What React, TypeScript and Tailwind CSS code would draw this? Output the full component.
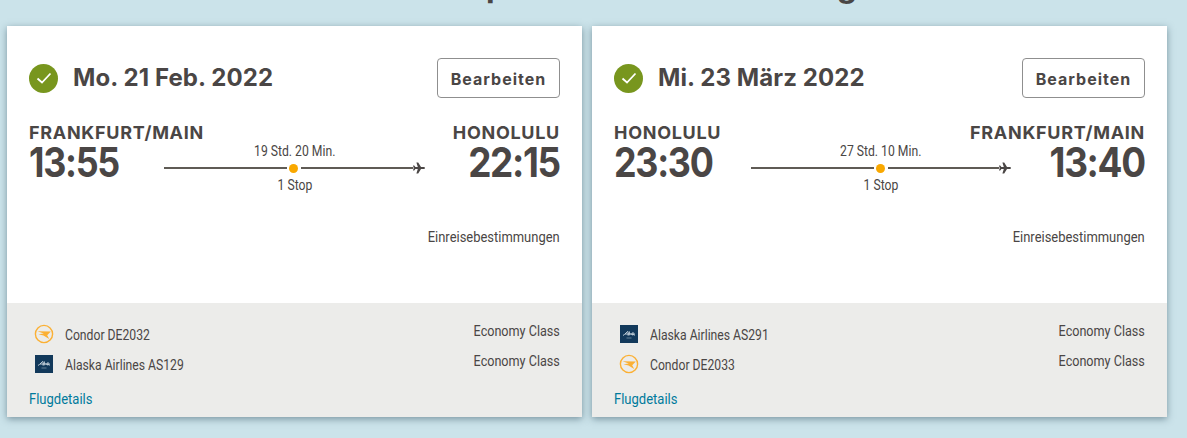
const HEAD = "font-['Inter','Liberation_Sans',sans-serif]"
const BODY = "font-['Roboto','Liberation_Sans',sans-serif]"

function CondorLogo() {
  return (
    <svg width="20" height="20" viewBox="0 0 20 20" fill="none">
      <circle cx="10" cy="10" r="8.6" stroke="#fbb034" strokeWidth="1.4" />
      <path d="M3.5 7.2 L16.8 7.4 L13.2 11.2 L15.2 15 L9.5 11.4 L4.5 10.2 L9.8 9.6 Z" fill="#fbb034" />
    </svg>
  )
}

function AlaskaLogo() {
  return (
    <span className="flex h-[18px] w-[18px] flex-col items-center justify-center bg-[#12395b]">
      <svg width="14" height="9" viewBox="0 0 14 9" fill="none">
        <path d="M1 5.5 C3 4.5 5 1.5 6 1.5 C6.5 3 6 4.5 6 5.5 M7.5 1.5 L7 5.5 M8.5 4 C9 3.5 10 3.5 10 5 M11 2 L10.8 5.5 M11.5 4 L12.5 5.5 M3 4 H13" stroke="#e6edf3" strokeWidth="0.8" />
        <path d="M4.5 8 H9.5" stroke="#9fb3c4" strokeWidth="0.6" />
      </svg>
    </span>
  )
}

function Plane() {
  return (
    <svg width="12" height="12" viewBox="0 0 12 12" className="shrink-0" fill="#4a4645">
      <path d="M0 3.6 L1.2 3.6 L2.4 5 H4.8 L3.4 0.4 H5.2 L8 5 H10.6 C11.4 5 12 5.5 12 6 C12 6.5 11.4 7 10.6 7 H8 L5.2 11.6 H3.4 L4.8 7 H2.4 L1.2 8.4 H0 L0.7 6 Z" />
    </svg>
  )
}

type Segment = { logo: 'condor' | 'alaska'; name: string }
type Flight = {
  date: string
  from: string
  to: string
  dep: string
  arr: string
  duration: string
  cols: string
  segments: Segment[]
}

const FLIGHTS: Flight[] = [
  {
    date: 'Mo. 21 Feb. 2022',
    from: 'FRANKFURT/MAIN',
    to: 'HONOLULU',
    dep: '13:55',
    arr: '22:15',
    duration: '19 Std. 20 Min.',
    cols: 'grid-cols-[135px_261px_135px]',
    segments: [
      { logo: 'condor', name: 'Condor DE2032' },
      { logo: 'alaska', name: 'Alaska Airlines AS129' },
    ],
  },
  {
    date: 'Mi. 23 März 2022',
    from: 'HONOLULU',
    to: 'FRANKFURT/MAIN',
    dep: '23:30',
    arr: '13:40',
    duration: '27 Std. 10 Min.',
    cols: 'grid-cols-[137px_260px_134px]',
    segments: [
      { logo: 'alaska', name: 'Alaska Airlines AS291' },
      { logo: 'condor', name: 'Condor DE2033' },
    ],
  },
]

function FlightCard({ flight }: { flight: Flight }) {
  return (
    <div className={`flex h-[391px] w-[575px] flex-col bg-white shadow-[0_2px_7px_rgba(40,70,85,0.5)] ${BODY}`}>
      <div className="flex-1 px-[22px] pt-8">
        <div className="flex items-center justify-between">
          <div className="flex items-center gap-[15px]">
            <span className="flex h-[29px] w-[29px] items-center justify-center rounded-full bg-[#78961e]">
              <svg width="16" height="12" viewBox="0 0 16 12" fill="none">
                <path d="M1.5 6.5 L6 10.5 L14.5 1.5" stroke="white" strokeWidth="1.8" />
              </svg>
            </span>
            <span className={`text-[24px] leading-7 font-bold tracking-[0.1px] text-[#4a4645] ${HEAD}`}>{flight.date}</span>
          </div>
          <button className={`h-10 w-[123px] rounded border border-[#8f8f8f] pt-px text-[16px] font-bold tracking-[1px] text-[#4a4645] ${HEAD}`}>
            Bearbeiten
          </button>
        </div>

        <div className={`mt-[25px] grid ${flight.cols}`}>
          <div>
            <div className={`text-[18px] leading-[20px] font-bold tracking-[0.7px] whitespace-nowrap text-[#4a4645] ${HEAD}`}>{flight.from}</div>
            <div className={`-mt-px origin-left scale-x-[0.875] text-[41px] leading-[40px] font-bold tracking-[-1.5px] text-[#4a4645] ${HEAD}`}>{flight.dep}</div>
          </div>
          <div className="mt-5 flex flex-col items-center text-[14px] leading-[17px] text-[#4a4645]">
            <div className="scale-x-[0.87]">{flight.duration}</div>
            <div className="flex h-4 w-full items-center">
              <div className="h-0.5 w-[123px] bg-[#5f5b55]" />
              <div className="mx-[2px] h-[9px] w-[9px] shrink-0 rounded-full bg-[#f9a800]" />
              <div className="ml-[1px] h-0.5 flex-1 bg-[#5f5b55]" />
              <Plane />
            </div>
            <div className="mt-px scale-x-[0.87]">1 Stop</div>
          </div>
          <div className="flex flex-col items-end">
            <div className={`text-[18px] leading-[20px] font-bold tracking-[0.7px] whitespace-nowrap text-[#4a4645] ${HEAD}`}>{flight.to}</div>
            <div className={`-mt-px origin-right scale-x-[0.9] text-[41px] leading-[40px] font-bold tracking-[-1.5px] text-[#4a4645] ${HEAD}`}>{flight.arr}</div>
          </div>
        </div>

        <div className="mt-[35px] flex justify-end text-[14px] leading-[17px] text-[#4a4645]">
          <span className="origin-right scale-x-[0.925]">Einreisebestimmungen</span>
        </div>
      </div>

      <div className="h-[114px] bg-[#ececea] px-[22px] pt-[18px] text-[14px] text-[#4a4645]">
        <div className="flex flex-col gap-[10px]">
          {flight.segments.map(s => (
            <div key={s.name} className="flex h-5 items-start justify-between">
              <div className="flex items-start gap-[11px] pl-[5px] leading-5">
                <span className="mt-[3px] flex h-5 w-5 items-center justify-center">
                  {s.logo === 'condor' ? <CondorLogo /> : <AlaskaLogo />}
                </span>
                <span className="mt-1 origin-left scale-x-[0.87] whitespace-nowrap">{s.name}</span>
              </div>
              <span className="origin-right scale-x-[0.9] leading-5">Economy Class</span>
            </div>
          ))}
        </div>
        <div className="mt-[18px] origin-left scale-x-[0.93] leading-5 text-[#007a9c]">Flugdetails</div>
      </div>
    </div>
  )
}

export default function App() {
  return (
    <div className="h-[438px] w-[1187px] overflow-hidden bg-[#cbe3ea]">
      <h1 className={`-mt-[34px] h-[60px] pl-[411px] text-[31.6px] leading-[40px] font-bold whitespace-nowrap text-[#4a4645] ${HEAD}`}>
        Überprüfen Sie Ihre Buchung
      </h1>
      <div className="flex gap-[10px] pl-[7px]">
        {FLIGHTS.map(f => (
          <FlightCard key={f.date} flight={f} />
        ))}
      </div>
    </div>
  )
}
